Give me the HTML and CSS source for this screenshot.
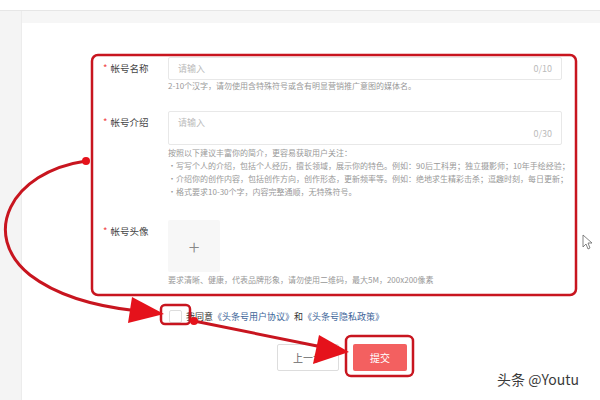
FILE: index.html
```html
<!DOCTYPE html>
<html lang="zh-CN">
<head>
    <meta charset="UTF-8">
    <title>帐号信息</title>
    <link rel="stylesheet" href="styles.css">
</head>
<body>
    <div class="topbar"></div>
    <div class="layout">
        <div class="sidebar"></div>
        <div class="content">
            <div class="panel">
                <div class="form-row">
                    <div class="label"><span class="req">*</span>帐号名称</div>
                    <div class="field">
                        <div class="input">
                            <span class="placeholder">请输入</span>
                            <span class="count">0/10</span>
                        </div>
                        <div class="hint">2-10个汉字，请勿使用含特殊符号或含有明显营销推广意图的媒体名。</div>
                    </div>
                </div>
                <div class="form-row row-intro">
                    <div class="label"><span class="req">*</span>帐号介绍</div>
                    <div class="field">
                        <div class="textarea">
                            <span class="placeholder">请输入</span>
                            <span class="count">0/30</span>
                        </div>
                        <div class="hint hint-list">
                            <p>按照以下建议丰富你的简介，更容易获取用户关注：</p>
                            <p>·写写个人的介绍，包括个人经历，擅长领域，展示你的特色。例如：90后工科男；独立摄影师；10年手绘经验；</p>
                            <p>·介绍你的创作内容，包括创作方向，创作形态，更新频率等。例如：绝地求生精彩击杀；逗趣时刻，每日更新；</p>
                            <p>·格式要求10-30个字，内容完整通顺，无特殊符号。</p>
                        </div>
                    </div>
                </div>
                <div class="form-row row-avatar">
                    <div class="label"><span class="req">*</span>帐号头像</div>
                    <div class="field">
                        <div class="upload">+</div>
                        <div class="hint">要求清晰、健康，代表品牌形象，请勿使用二维码，最大5M，200x200像素</div>
                    </div>
                </div>
                <div class="agree">
                    <span class="checkbox"></span>
                    <span>我同意<a class="link">《头条号用户协议》</a>和<a class="link">《头条号隐私政策》</a></span>
                </div>
                <div class="actions">
                    <button class="btn btn-prev">上一步</button>
                    <button class="btn btn-submit">提交</button>
                </div>
            </div>
        </div>
    </div>

    <!-- annotations drawn over the screenshot -->
    <svg class="marks" width="600" height="400" viewBox="0 0 600 400">
        <rect x="92" y="55" width="484" height="240" rx="6" fill="none" stroke="#c8151f" stroke-width="2.5"/>
        <rect x="161" y="305" width="29" height="19" rx="4" fill="none" stroke="#c8151f" stroke-width="2.5"/>
        <rect x="346" y="336" width="67" height="40" rx="5" fill="none" stroke="#c8151f" stroke-width="2.5"/>
        <path d="M86,161 C 10,172 -20,235 30,275 C 60,298 100,307 138,311" fill="none" stroke="#c8151f" stroke-width="3"/>
        <polygon points="164,314 132,297 128,323" fill="#e5121b"/>
        <circle cx="86" cy="161" r="4" fill="#e5121b"/>
        <path d="M194,321 L322,347" fill="none" stroke="#c8151f" stroke-width="3"/>
        <polygon points="349,352 319,335 313,364" fill="#e5121b"/>
        <circle cx="194" cy="321" r="4" fill="#e5121b"/>
        <path d="M583,235 L583,247 L586,244 L588,249 L590,248 L588,243 L592,243 Z" fill="#fff" stroke="#666" stroke-width="0.8"/>
    </svg>
    <div class="watermark">头条 @Youtu</div>
</body>
</html>
```

FILE: styles.css
```css
body {
    margin: 0;
    width: 600px;
    height: 400px;
    overflow: hidden;
    font-family: "Noto Sans CJK SC", "Noto Sans", sans-serif;
    color: #333;
    background-color: #fff;
    position: relative;
}
.topbar {
    height: 10px;
    background-color: #fff;
    border-bottom: 1px solid #e6e6e6;
}
.layout {
    display: flex;
    height: 389px;
}
.sidebar {
    width: 21px;
    background-color: #f4f4f4;
    border-right: 1px solid #ececec;
}
.content {
    flex: 1;
    background-color: #f6f6f6;
    padding-top: 12px;
}
.panel {
    background-color: #fff;
    height: 100%;
    padding: 34px 0 0 81px;
    box-sizing: border-box;
}
.form-row {
    display: flex;
    margin-bottom: 19px;
}
.row-intro {
    margin-bottom: 22px;
}
.row-avatar {
    margin-bottom: 0;
}
.label {
    width: 65px;
    font-size: 9.5px;
    line-height: 22px;
    color: #444;
    flex-shrink: 0;
}
.req {
    color: #f04142;
    margin-right: 3px;
}
.field {
    width: 394px;
}
.input,
.textarea {
    border: 1px solid #e8e8e8;
    border-radius: 2px;
    box-sizing: border-box;
    display: flex;
    justify-content: space-between;
    padding: 0 9px;
    font-size: 9px;
    color: #bbb;
}
.input {
    height: 23px;
    align-items: center;
}
.textarea {
    height: 34px;
    padding-top: 4px;
}
.textarea .count {
    align-self: flex-end;
    padding-bottom: 4px;
}
.hint {
    font-size: 8px;
    line-height: 12px;
    color: #999;
}
.hint-list {
    margin-top: 1px;
    line-height: 13px;
    white-space: nowrap;
}
.hint-list p {
    margin: 0;
}
.upload {
    width: 52px;
    height: 52px;
    background-color: #f7f7f7;
    border-radius: 2px;
    display: flex;
    align-items: center;
    justify-content: center;
    font-size: 20px;
    font-weight: 300;
    color: #888;
    margin-bottom: 2px;
}
.agree {
    margin: 24px 0 0 66px;
    display: flex;
    align-items: center;
    font-size: 9px;
    line-height: 12px;
    color: #333;
}
.checkbox {
    width: 11px;
    height: 11px;
    border: 1px solid #ddd;
    border-radius: 2px;
    margin-right: 4px;
    background-color: #fff;
}
.link {
    color: #406599;
}
.actions {
    margin: 21px 0 0 174px;
    display: flex;
    gap: 14px;
}
.btn {
    height: 27px;
    border-radius: 2px;
    font-family: inherit;
    font-size: 10px;
    padding: 0;
    cursor: pointer;
}
.btn-prev {
    width: 62px;
    background-color: #fff;
    border: 1px solid #ddd;
    color: #666;
}
.btn-submit {
    width: 54px;
    background-color: #f36060;
    border: none;
    color: #fff;
}
.marks {
    position: absolute;
    left: 0;
    top: 0;
}
.watermark {
    position: absolute;
    left: 497px;
    top: 369px;
    font-size: 14px;
    color: #3a3a3a;
    text-shadow: 0 0 2px #fff;
}
```
